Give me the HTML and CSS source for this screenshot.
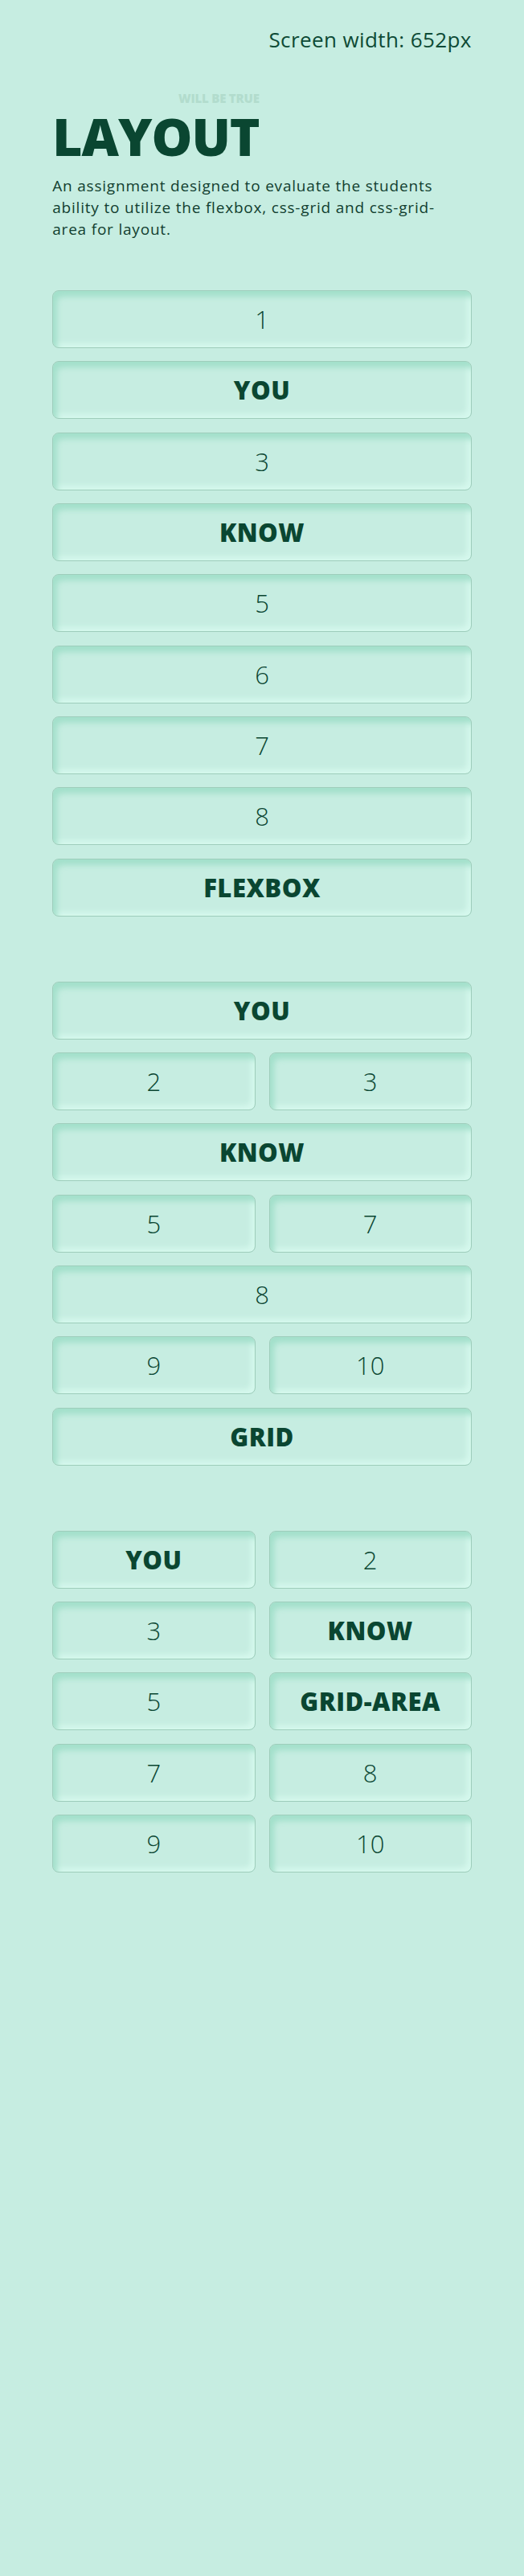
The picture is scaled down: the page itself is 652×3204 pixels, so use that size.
FILE: index.html
```html
<!DOCTYPE html>
<html lang="en">
<head>
<meta charset="utf-8">
<title>Layout</title>
<link rel="stylesheet" href="styles.css">
</head>
<body>
<div class="page">
  <header class="topbar">Screen width: 652px</header>
  <section class="intro">
    <div class="title-wrap">
      <span class="tag">WILL BE TRUE</span>
      <h1 class="title">LAYOUT</h1>
    </div>
    <p class="lead">An assignment designed to evaluate the students<br>ability to utilize the flexbox, css-grid and css-grid-<br>area for layout.</p>
  </section>
  <main class="sections">
    <section class="flex-list">
      <div class="cell num">1</div>
      <div class="cell word">YOU</div>
      <div class="cell num">3</div>
      <div class="cell word">KNOW</div>
      <div class="cell num">5</div>
      <div class="cell num">6</div>
      <div class="cell num">7</div>
      <div class="cell num">8</div>
      <div class="cell word">FLEXBOX</div>
    </section>
    <section class="grid-list">
      <div class="cell word span2">YOU</div>
      <div class="cell num">2</div>
      <div class="cell num">3</div>
      <div class="cell word span2">KNOW</div>
      <div class="cell num">5</div>
      <div class="cell num">7</div>
      <div class="cell num span2">8</div>
      <div class="cell num">9</div>
      <div class="cell num">10</div>
      <div class="cell word span2">GRID</div>
    </section>
    <section class="area-list">
      <div class="cell word a-you">YOU</div>
      <div class="cell num a-2">2</div>
      <div class="cell num a-3">3</div>
      <div class="cell word a-know">KNOW</div>
      <div class="cell num a-5">5</div>
      <div class="cell word a-area">GRID-AREA</div>
      <div class="cell num a-7">7</div>
      <div class="cell num a-8">8</div>
      <div class="cell num a-9">9</div>
      <div class="cell num a-10">10</div>
    </section>
  </main>
</div>
</body>
</html>
```
FILE: styles.css
```css
html, body {
  margin: 0;
  padding: 0;
}
body {
  background: #c6ede1;
  color: #0a4631;
  font-family: "Open Sans", "Liberation Sans", sans-serif;
  min-height: 3204px;
}
.page {
  width: 80%;
  margin: 0 auto;
}
.topbar {
  text-align: right;
  font-size: 26px;
  font-weight: 400;
  letter-spacing: 0.4px;
  line-height: 36px;
  padding-top: 31px;
  color: #0d4a35;
}
.intro {
  margin-top: 44px;
}
.title-wrap {
  display: inline-flex;
  flex-direction: column;
  align-items: flex-end;
}
.tag {
  font-size: 15px;
  font-weight: 800;
  line-height: 20px;
  color: #b2dccd;
  letter-spacing: -0.2px;
}
.title {
  margin: 0;
  font-size: 64px;
  font-weight: 800;
  line-height: 76px;
  letter-spacing: -1px;
}
.lead {
  margin: 10px 0 0;
  font-size: 19px;
  letter-spacing: 0.8px;
  line-height: 27px;
  color: #123f30;
}
.sections {
  display: flex;
  flex-direction: column;
  gap: 81px;
  margin-top: 62px;
}
.cell {
  box-sizing: border-box;
  height: 72px;
  border: 1px solid #9ecdbb;
  border-radius: 8px;
  background: #c6ede1;
  box-shadow: inset 5px 7px 7px #a3e0cb, inset -5px -5px 6px #d5f8ed;
  display: flex;
  align-items: center;
  justify-content: center;
  font-size: 31px;
  color: #0a4631;
}
.num {
  font-weight: 300;
}
.word {
  font-weight: 800;
  letter-spacing: 0.5px;
}
.flex-list {
  display: flex;
  flex-direction: column;
  gap: 16.33px;
}
.grid-list {
  display: grid;
  grid-template-columns: 1fr 1fr;
  column-gap: 17px;
  row-gap: 16.33px;
}
.span2 {
  grid-column: span 2;
}
.area-list {
  display: grid;
  grid-template-columns: 1fr 1fr;
  column-gap: 17px;
  row-gap: 16.33px;
  grid-template-areas:
    "you two"
    "three know"
    "five area"
    "seven eight"
    "nine ten";
}
.a-you { grid-area: you; }
.a-2 { grid-area: two; }
.a-3 { grid-area: three; }
.a-know { grid-area: know; }
.a-5 { grid-area: five; }
.a-area { grid-area: area; }
.a-7 { grid-area: seven; }
.a-8 { grid-area: eight; }
.a-9 { grid-area: nine; }
.a-10 { grid-area: ten; }
```
